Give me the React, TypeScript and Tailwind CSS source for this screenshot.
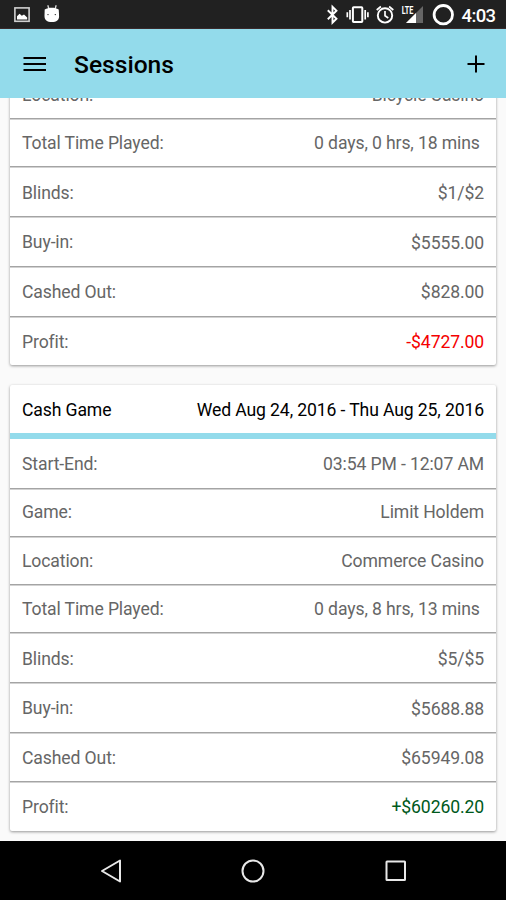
import React from "react";

type Row = {
  label: string;
  value: string;
  height: string;
  color?: string;
  nudge?: string;
};

const bicycle: Row[] = [
  { label: "Location:", value: "Bicycle Casino", height: "h-[48px]" },
  { label: "Total Time Played:", value: "0 days, 0 hrs, 18 mins ", height: "h-[48px]" },
  { label: "Blinds:", value: "$1/$2", height: "h-[50px] pt-[2px]" },
  { label: "Buy-in:", value: "$5555.00", height: "h-[50px]", nudge: "pt-[2px]" },
  { label: "Cashed Out:", value: "$828.00", height: "h-[50px]" },
  { label: "Profit:", value: "-$4727.00", height: "h-[48px] pt-[2px]", color: "text-[#f50000]" },
];

const commerce: Row[] = [
  { label: "Start-End:", value: "03:54 PM - 12:07 AM", height: "h-[50px]" },
  { label: "Game:", value: "Limit Holdem", height: "h-[48px] pb-[1px]" },
  { label: "Location:", value: "Commerce Casino", height: "h-[48px]" },
  { label: "Total Time Played:", value: "0 days, 8 hrs, 13 mins ", height: "h-[48px]" },
  { label: "Blinds:", value: "$5/$5", height: "h-[50px] pt-[2px]" },
  { label: "Buy-in:", value: "$5688.88", height: "h-[50px]", nudge: "pt-[2px]" },
  { label: "Cashed Out:", value: "$65949.08", height: "h-[49px] pt-[2px]" },
  { label: "Profit:", value: "+$60260.20", height: "h-[49px] pt-[1px]", color: "text-[#00591c]" },
];

function Rows({ rows }: { rows: Row[] }) {
  return (
    <>
      {rows.map((row) => (
        <div
          key={row.label}
          className={`flex shrink-0 items-center justify-between border-b border-[#a4a4a4] px-3 shadow-[0_1px_0_#d2d2d2] last:border-b-0 last:shadow-none ${row.height}`}
        >
          <span>{row.label}</span>
          <span className={`whitespace-pre ${row.color ?? ""} ${row.nudge ?? ""}`}>{row.value}</span>
        </div>
      ))}
    </>
  );
}

function StatusBar() {
  return (
    <div className="flex h-[29px] shrink-0 items-center border-b border-[#3a2a2c] bg-[#212121] text-white">
      <svg width="506" height="29" viewBox="0 0 506 29" fill="none">
        <rect x="14.9" y="7.9" width="14.2" height="13.4" stroke="#d0d0d0" strokeWidth="1.6" />
        <path d="M17 19.5v-3.2l2.6-2.6 2.2 2 2.2-1.2 3.2 3v2z" fill="#fff" />
        <path d="M47.8 5.2l1.2 4M56.2 5.2l-1.2 4" stroke="#ddd" strokeWidth="1.3" />
        <path d="M44.7 9.5c4-2.3 10-2.3 14 0l.4 6.5c0 4-2.5 6-7.3 6s-7.3-2-7.3-6z" fill="#fff" />
        <circle cx="48" cy="14.6" r=".7" fill="#222" />
        <circle cx="55.3" cy="14.6" r=".7" fill="#222" />
        <path d="M327.8 10.2l8.7 8.5-4 4V6.8l4 4-8.7 8.5" stroke="#fff" strokeWidth="1.9" />
        <rect x="352.9" y="7.3" width="9.4" height="14.8" rx=".8" stroke="#fff" strokeWidth="2" />
        <path d="M350 10v9.5M365.2 10v9.5M347.3 12.3v5M367.9 12.3v5" stroke="#fff" strokeWidth="1.7" />
        <circle cx="385" cy="15.4" r="7.2" stroke="#fff" strokeWidth="1.9" />
        <path d="M385 11v4.7l3.3 2.3M376.7 10l4.2-3.5M393.3 10l-4.2-3.5" stroke="#fff" strokeWidth="1.7" />
        <path d="M406 23L423 6v17z" fill="#666" />
        <path d="M406 23l10-10v10z" fill="#fff" />
        <text x="401.7" y="14" fill="#fff" fontFamily="Roboto" fontSize="11.5" fontWeight="700" textLength="11.5" lengthAdjust="spacingAndGlyphs">LTE</text>
        <circle cx="443.3" cy="14.7" r="9.2" stroke="#fff" strokeWidth="2.8" />
        <text x="461.5" y="22" fill="#fff" fontFamily="Roboto" fontSize="18.5" fontWeight="500" textLength="34.5">4:03</text>
      </svg>
    </div>
  );
}

export default function App() {
  return (
    <div className="flex h-[900px] w-[506px] flex-col overflow-hidden bg-[#fafafa] font-['Roboto',sans-serif] text-[17.6px] leading-6 tracking-[-0.12px] text-[#666]">
      <StatusBar />
      <header className="flex h-[69px] shrink-0 items-center bg-[#93dbeb] pl-[23px] pr-[21px] text-black">
        <svg width="24" height="18" viewBox="0 0 24 18" stroke="#000" strokeWidth="2">
          <path d="M.5 3h22.5M.5 9h22.5M.5 15h22.5" />
        </svg>
        <h1 className="ml-[27px] mt-[3px] text-[24.6px] font-medium leading-8 tracking-normal">Sessions</h1>
        <svg className="ml-auto" width="18" height="18" viewBox="0 0 18 18" stroke="#000" strokeWidth="2">
          <path d="M.5 9h17M9 .5v17" />
        </svg>
      </header>

      {/* list scrolled to the bottom */}
      <main className="flex h-[743px] shrink-0 flex-col justify-end gap-5 overflow-hidden px-[10px] pb-[10px]">
        <section className="flex shrink-0 flex-col rounded-[2px] bg-white shadow-[0_1px_3px_rgba(0,0,0,0.4)]">
          <Rows rows={bicycle} />
        </section>
        <section className="flex shrink-0 flex-col rounded-[2px] bg-white shadow-[0_1px_3px_rgba(0,0,0,0.4)]">
          <div className="flex h-[54px] items-center justify-between border-b-[6px] border-[#93dbeb] px-3 pt-[2px] text-black">
            <span>Cash Game</span>
            <span>Wed Aug 24, 2016 - Thu Aug 25, 2016</span>
          </div>
          <div className="flex flex-col">
            <Rows rows={commerce} />
          </div>
        </section>
      </main>

      <nav className="flex h-[59px] shrink-0 items-center justify-center bg-black">
        <svg width="310" height="26" viewBox="0 0 310 26" fill="none" stroke="#e8e8e8" strokeWidth="2">
          <path d="M4 13L22 2.5v21z" strokeLinejoin="round" />
          <circle cx="155" cy="13" r="10.5" />
          <rect x="288.5" y="3.5" width="18.5" height="18.5" rx=".5" />
        </svg>
      </nav>
    </div>
  );
}
